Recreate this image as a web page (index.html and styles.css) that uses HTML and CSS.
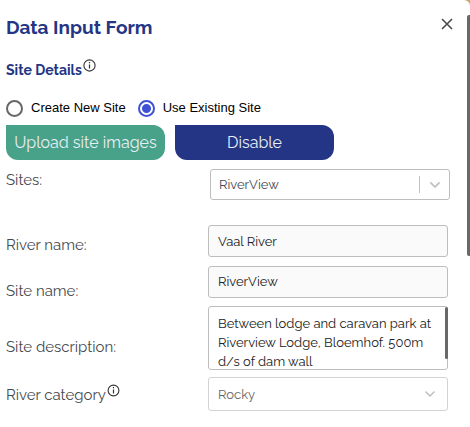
FILE: index.html
```html
<!DOCTYPE html>
<html lang="en">
<head>
<meta charset="utf-8">
<title>Data Input Form</title>
<link rel="stylesheet" href="styles.css">
</head>
<body>
<main class="panel">
  <header class="header">
    <h1 class="title">Data Input Form</h1>
    <button class="close" type="button" aria-label="Close">
      <svg width="12" height="12" viewBox="0 0 12 12"><path d="M1 1l10 10M11 1L1 11" stroke="#4a4a4d" stroke-width="1.6" fill="none"/></svg>
    </button>
  </header>
  <form>
    <h2 class="subtitle">Site Details
      <svg class="info" width="13" height="13" viewBox="0 0 13 13"><circle cx="6.5" cy="6.5" r="5.6" fill="none" stroke="#333" stroke-width="1.1"/><path d="M6.5 5.5v4M6.5 3v1.3" stroke="#333" stroke-width="1.2"/></svg>
    </h2>
    <div class="choices">
      <label class="choice"><input type="radio" name="mode">Create New Site</label>
      <label class="choice"><input type="radio" name="mode" checked>Use Existing Site</label>
    </div>
    <div class="actions">
      <button class="action upload" type="button">Upload site images</button>
      <button class="action" type="button">Disable</button>
    </div>
    <div class="row sites">
      <label for="sites">Sites:</label>
      <div class="field">
        <select id="sites"><option>RiverView</option></select>
        <span class="arrow divided"><svg width="12" height="8" viewBox="0 0 12 8"><path d="M2 2l4 4 4-4" stroke="#c4c4c4" stroke-width="1.8" fill="none" stroke-linecap="round"/></svg></span>
      </div>
    </div>
    <div class="row">
      <label for="river">River name:</label>
      <div class="field"><input id="river" type="text" value="Vaal River"></div>
    </div>
    <div class="row name">
      <label for="site">Site name:</label>
      <div class="field"><input id="site" type="text" value="RiverView"></div>
    </div>
    <div class="row description">
      <label for="description">Site description:</label>
      <div class="field">
        <textarea id="description" rows="3">Between lodge and caravan park at Riverview Lodge, Bloemhof. 500m d/s of dam wall</textarea>
        <span class="thumb"></span>
      </div>
    </div>
    <div class="row category">
      <label for="category">River category
        <svg class="info" width="13" height="13" viewBox="0 0 13 13"><circle cx="6.5" cy="6.5" r="5.4" fill="none" stroke="#333" stroke-width="1.1"/><path d="M6.5 5.5v4M6.5 3v1.3" stroke="#333" stroke-width="1.2"/></svg>
      </label>
      <div class="field">
        <select id="category"><option>Rocky</option></select>
        <span class="arrow"><svg width="12" height="8" viewBox="0 0 12 8"><path d="M2 2l4 4 4-4" stroke="#bdbdbd" stroke-width="1.5" fill="none" stroke-linecap="round"/></svg></span>
      </div>
    </div>
  </form>
</main>
<div class="page-thumb"></div>
</body>
</html>
```
FILE: styles.css
```css
* { box-sizing: border-box; }
body {
  margin: 0;
  background: #c9a664;
  font-family: Raleway, Lato, "Open Sans", sans-serif;
  color: #484a4f;
}
.panel {
  min-height: 100vh;
  padding: 12px 22px 16px 6px;
  background: #fff;
  border-top-right-radius: 6px;
}
.header { display: flex; justify-content: space-between; align-items: flex-start; }
.title { margin: 0; font-size: 19px; font-weight: 700; line-height: 30px; color: #233584; }
.close { padding: 6px 0; margin-right: -5px; border: 0; background: none; line-height: 0; }
.subtitle { margin: 16px 0 0; font-size: 14px; font-weight: 700; line-height: 24px; color: #233584; }
.info { margin-left: -2px; vertical-align: 3px; }
.choices { display: flex; gap: 12px; margin-top: 14px; }
.choice {
  display: flex;
  align-items: center;
  gap: 8px;
  font: 13px/24px "Liberation Sans", sans-serif;
  color: #000;
}
.choice input {
  appearance: none;
  width: 17px;
  height: 17px;
  margin: 0;
  border: 2px solid #666;
  border-radius: 50%;
}
.choice input:checked {
  border-color: #3f51d5;
  background: radial-gradient(circle, #3f51d5 4px, #fff 5px);
}
.actions { display: flex; gap: 10px; margin-top: 5px; }
.action {
  width: 159px;
  height: 35px;
  padding: 0;
  border: 0;
  border-radius: 0 12px 12px;
  background: #233584;
  color: #e8f0f4;
  font: 16px/24px Raleway, Lato, sans-serif;
}
.upload { background: #48a189; }
.row {
  display: grid;
  grid-template-columns: 202px 1fr;
  align-items: center;
  margin-top: 9px;
}
.row label { font-size: 15px; line-height: 24px; padding-top: 7px; }
.field { position: relative; display: flex; }
.field input, .field textarea, .field select {
  appearance: none;
  width: 100%;
  height: 32px;
  margin: 0;
  padding: 0 9px;
  border: 1px solid #bdbdbd;
  border-radius: 3px;
  background: #fafafa;
  color: #222;
  font: 13px/19px Raleway, Lato, sans-serif;
}
.field textarea {
  height: 64px;
  padding: 7px 9px 0;
  background: #fff;
  overflow: hidden;
  resize: none;
}
.sites { margin: 9px -2px 25px 0; grid-template-columns: 204px 1fr; align-items: start; }
.sites label { padding: 0; line-height: 22px; }
.field select { background: #fff; color: #484a4f; padding: 0 8px; }
.sites select { height: 31px; }
.name { align-items: start; }
.name label { height: 32px; padding-top: 13px; }
.name input { padding-bottom: 2px; }
.description { margin-top: 8px; }
.description label { padding-top: 18px; }
.category { margin-top: 7px; }
.category label { padding-top: 2px; }
.category select { height: 34px; border-color: #d3d3d3; color: #666; padding: 0 9px; }
.arrow {
  position: absolute;
  right: 1px;
  top: 7px;
  bottom: 7px;
  width: 30px;
  display: flex;
  align-items: center;
  justify-content: center;
  pointer-events: none;
}
.category .arrow { width: 34px; }
.divided { border-left: 1px solid #c4c4c4; }
.thumb {
  position: absolute;
  top: 1px;
  right: 0;
  width: 3px;
  height: 52px;
  border-radius: 2px;
  background: #686868;
}
.page-thumb {
  position: fixed;
  top: 15px;
  right: 0;
  width: 3px;
  height: 241px;
  border-radius: 2px 0 0 2px;
  background: #686868;
}
```
